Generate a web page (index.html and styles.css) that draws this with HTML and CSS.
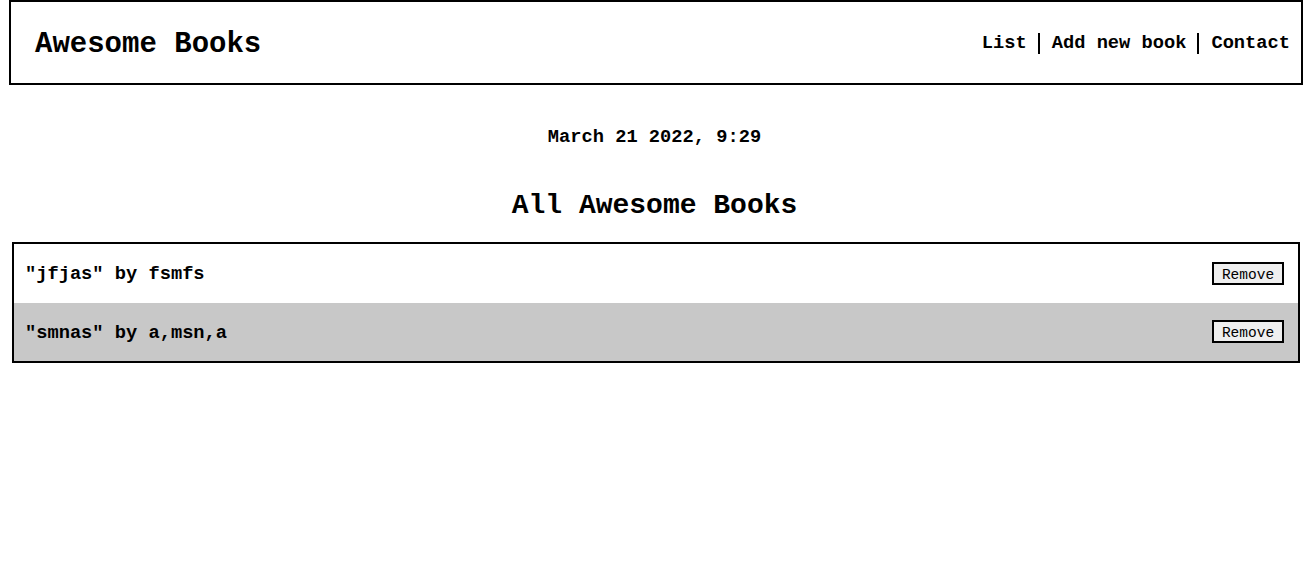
FILE: index.html
```html
<!DOCTYPE html>
<html lang="en">
<head>
<meta charset="utf-8">
<title>Awesome Books</title>
<link rel="stylesheet" href="styles.css">
</head>
<body>
<header class="topbar">
  <h1 class="logo">Awesome Books</h1>
  <nav>
    <ul class="nav-list">
      <li class="nav-item"><a href="#" class="nav-link">List</a></li>
      <li class="nav-item"><a href="#" class="nav-link">Add new book</a></li>
      <li class="nav-item"><a href="#" class="nav-link">Contact</a></li>
    </ul>
  </nav>
</header>
<main>
  <p class="date">March 21 2022, 9:29</p>
  <h2 class="section-title">All Awesome Books</h2>
  <ul class="book-list">
    <li class="book">
      <span class="book-text">"jfjas" by fsmfs</span>
      <button class="remove-btn" type="button">Remove</button>
    </li>
    <li class="book book-alt">
      <span class="book-text">"smnas" by a,msn,a</span>
      <button class="remove-btn" type="button">Remove</button>
    </li>
  </ul>
</main>
</body>
</html>
```
FILE: styles.css
```css
* { box-sizing: border-box; }

body {
  margin: 0;
  font-family: "Liberation Mono", "Courier New", monospace;
  font-weight: bold;
  color: #000;
  background: #fff;
}

.topbar {
  margin: 0 6px 0 9px;
  height: 85px;
  border: 2px solid #000;
  display: flex;
  align-items: center;
  justify-content: space-between;
  padding: 2px 0 0 24px;
}

.logo {
  margin: 0;
  font-size: 29px;
  font-weight: bold;
  line-height: 1;
  position: relative;
  top: 1px;
}

.nav-list {
  list-style: none;
  margin: 0;
  padding: 0;
  display: flex;
  font-size: 18.72px;
}

.nav-item {
  padding: 0 11px;
  line-height: 21px;
}

.nav-item + .nav-item {
  border-left: 2px solid #000;
  padding-left: 12px;
}

.nav-link {
  color: #000;
  text-decoration: none;
}

.date {
  margin: 42px 0 0;
  text-align: center;
  font-size: 18.72px;
  line-height: 21px;
}

.section-title {
  margin: 42px 0 0;
  text-align: center;
  font-size: 28px;
  line-height: 32px;
}

.book-list {
  list-style: none;
  margin: 20px 9px 0 12px;
  padding: 0;
  border: 2px solid #000;
}

.book {
  height: 58.5px;
  display: flex;
  align-items: center;
  justify-content: space-between;
  padding: 2px 14px 0 11px;
  font-size: 18.72px;
}

.remove-btn {
  font-family: "Liberation Mono", "Courier New", monospace;
  font-weight: normal;
  font-size: 14.5px;
  width: 72px;
  height: 23px;
  padding: 3px 0 0;
  line-height: 16px;
  border: 2px solid #000;
  background: #efefef;
  color: #000;
  position: relative;
  top: -1px;
}

.book-alt {
  background: #c8c8c8;
}
```
